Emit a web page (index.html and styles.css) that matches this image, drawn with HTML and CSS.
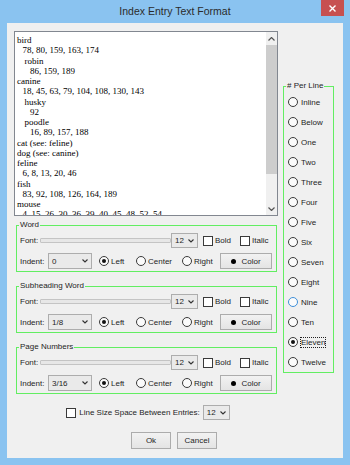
FILE: index.html
```html
<!DOCTYPE html>
<html lang="en">
<head>
    <meta charset="UTF-8">
    <meta name="viewport" content="width=device-width, initial-scale=1.0">
    <title>Index Entry Text Format</title>
    <link rel="stylesheet" href="styles.css">
</head>
<body>
    <div class="window">
        <div class="titlebar">
            <span></span>
            <span class="title">Index Entry Text Format</span>
            <span class="close">
                <svg width="7" height="7" viewBox="0 0 7 7"><path d="M0.5 0.5 L6.5 6.5 M6.5 0.5 L0.5 6.5" stroke="#fff" stroke-width="1.4"/></svg>
            </span>
        </div>

        <div class="client">
            <div class="main">
                <div class="left">
                    <!-- preview of the index -->
                    <div class="preview">
                        <div class="preview-text">
                            <div class="e0">bird</div>
                            <div class="e1">78, 80, 159, 163, 174</div>
                            <div class="e2">robin</div>
                            <div class="e3">86, 159, 189</div>
                            <div class="e0">canine</div>
                            <div class="e1">18, 45, 63, 79, 104, 108, 130, 143</div>
                            <div class="e2">husky</div>
                            <div class="e3">92</div>
                            <div class="e2">poodle</div>
                            <div class="e3">16, 89, 157, 188</div>
                            <div class="e0">cat (see: feline)</div>
                            <div class="e0">dog (see: canine)</div>
                            <div class="e0">feline</div>
                            <div class="e1">6, 8, 13, 20, 46</div>
                            <div class="e0">fish</div>
                            <div class="e1">83, 92, 108, 126, 164, 189</div>
                            <div class="e0">mouse</div>
                            <div class="e1">4, 15, 26, 30, 36, 39, 40, 45, 48, 52, 54</div>
                        </div>
                        <div class="scrollbar">
                            <div class="arrow">
                                <svg width="7" height="4" viewBox="0 0 7 4"><path d="M0.5 3.5 L3.5 0.5 L6.5 3.5" fill="none" stroke="#555" stroke-width="1.2"/></svg>
                            </div>
                            <div class="thumb"></div>
                            <div class="track"></div>
                            <div class="arrow">
                                <svg width="7" height="4" viewBox="0 0 7 4"><path d="M0.5 0.5 L3.5 3.5 L6.5 0.5" fill="none" stroke="#555" stroke-width="1.2"/></svg>
                            </div>
                        </div>
                    </div>

                    <fieldset class="group">
                        <legend>Word</legend>
                        <div class="row font-row">
                            <span class="lbl">Font:</span>
                            <span class="slider"></span>
                            <span class="combo size-combo">12 <svg width="6" height="4" viewBox="0 0 6 4"><path d="M0.5 0.5 L3 3 L5.5 0.5" fill="none" stroke="#333" stroke-width="1.1"/></svg></span>
                            <span class="opt opt-bold"><span class="box"></span>Bold</span>
                            <span class="opt"><span class="box"></span>Italic</span>
                        </div>
                        <div class="row indent-row">
                            <span class="lbl indent-lbl">Indent:</span>
                            <span class="combo indent-combo">0 <svg width="6" height="4" viewBox="0 0 6 4"><path d="M0.5 0.5 L3 3 L5.5 0.5" fill="none" stroke="#333" stroke-width="1.1"/></svg></span>
                            <span class="opt opt-left"><span class="radio on"></span>Left</span>
                            <span class="opt opt-center"><span class="radio"></span>Center</span>
                            <span class="opt opt-right"><span class="radio"></span>Right</span>
                            <span class="btn color-btn"><span class="dot"></span>Color</span>
                        </div>
                    </fieldset>

                    <fieldset class="group">
                        <legend>Subheading Word</legend>
                        <div class="row font-row">
                            <span class="lbl">Font:</span>
                            <span class="slider"></span>
                            <span class="combo size-combo">12 <svg width="6" height="4" viewBox="0 0 6 4"><path d="M0.5 0.5 L3 3 L5.5 0.5" fill="none" stroke="#333" stroke-width="1.1"/></svg></span>
                            <span class="opt opt-bold"><span class="box"></span>Bold</span>
                            <span class="opt"><span class="box"></span>Italic</span>
                        </div>
                        <div class="row indent-row">
                            <span class="lbl indent-lbl">Indent:</span>
                            <span class="combo indent-combo">1/8 <svg width="6" height="4" viewBox="0 0 6 4"><path d="M0.5 0.5 L3 3 L5.5 0.5" fill="none" stroke="#333" stroke-width="1.1"/></svg></span>
                            <span class="opt opt-left"><span class="radio on"></span>Left</span>
                            <span class="opt opt-center"><span class="radio"></span>Center</span>
                            <span class="opt opt-right"><span class="radio"></span>Right</span>
                            <span class="btn color-btn"><span class="dot"></span>Color</span>
                        </div>
                    </fieldset>

                    <fieldset class="group">
                        <legend>Page Numbers</legend>
                        <div class="row font-row">
                            <span class="lbl">Font:</span>
                            <span class="slider"></span>
                            <span class="combo size-combo">12 <svg width="6" height="4" viewBox="0 0 6 4"><path d="M0.5 0.5 L3 3 L5.5 0.5" fill="none" stroke="#333" stroke-width="1.1"/></svg></span>
                            <span class="opt opt-bold"><span class="box"></span>Bold</span>
                            <span class="opt"><span class="box"></span>Italic</span>
                        </div>
                        <div class="row indent-row">
                            <span class="lbl indent-lbl">Indent:</span>
                            <span class="combo indent-combo">3/16 <svg width="6" height="4" viewBox="0 0 6 4"><path d="M0.5 0.5 L3 3 L5.5 0.5" fill="none" stroke="#333" stroke-width="1.1"/></svg></span>
                            <span class="opt opt-left"><span class="radio on"></span>Left</span>
                            <span class="opt opt-center"><span class="radio"></span>Center</span>
                            <span class="opt opt-right"><span class="radio"></span>Right</span>
                            <span class="btn color-btn"><span class="dot"></span>Color</span>
                        </div>
                    </fieldset>

                    <div class="line-size">
                        <span class="box"></span>
                        <span class="line-size-text">Line Size Space Between Entries:</span>
                        <span class="combo size-combo">12 <svg width="6" height="4" viewBox="0 0 6 4"><path d="M0.5 0.5 L3 3 L5.5 0.5" fill="none" stroke="#333" stroke-width="1.1"/></svg></span>
                    </div>
                </div>

                <div class="right">
                    <fieldset class="per-line">
                        <legend># Per Line</legend>
                        <div class="choice"><span class="radio"></span>Inline</div>
                        <div class="choice"><span class="radio"></span>Below</div>
                        <div class="choice"><span class="radio"></span>One</div>
                        <div class="choice"><span class="radio"></span>Two</div>
                        <div class="choice"><span class="radio"></span>Three</div>
                        <div class="choice"><span class="radio"></span>Four</div>
                        <div class="choice"><span class="radio"></span>Five</div>
                        <div class="choice"><span class="radio"></span>Six</div>
                        <div class="choice"><span class="radio"></span>Seven</div>
                        <div class="choice"><span class="radio"></span>Eight</div>
                        <div class="choice"><span class="radio hover"></span>Nine</div>
                        <div class="choice"><span class="radio"></span>Ten</div>
                        <div class="choice"><span class="radio on"></span><span class="focus">Eleven</span></div>
                        <div class="choice"><span class="radio"></span>Twelve</div>
                    </fieldset>
                </div>
            </div>

            <div class="buttons">
                <span class="btn dlg-btn">Ok</span>
                <span class="btn dlg-btn">Cancel</span>
            </div>
        </div>
    </div>
</body>
</html>
```

FILE: styles.css
```css
body {
    margin: 0;
    padding: 0;
    font-family: "Liberation Sans", Arial, sans-serif;
    font-size: 8px;
    color: #1e1e1e;
}
.window {
    width: 350px;
    height: 465px;
    box-sizing: border-box;
    padding: 0 7px 7px 7px;
    background-color: #8ac3f0;
    display: flex;
    flex-direction: column;
}
.titlebar {
    height: 23px;
    display: grid;
    grid-template-columns: 1fr auto 1fr;
    align-items: start;
}
.title {
    line-height: 23px;
    font-size: 10.5px;
    color: #2b2b2b;
}
.close {
    justify-self: end;
    width: 23px;
    height: 16px;
    margin-right: -1px;
    background-color: #c75050;
    display: flex;
    align-items: center;
    justify-content: center;
}
.client {
    flex: 1;
    background-color: #f0f0f0;
    padding: 8px 9px 0 7px;
    display: flex;
    flex-direction: column;
}
.main {
    display: flex;
    gap: 5px;
}
.left {
    width: 264px;
    display: flex;
    flex-direction: column;
}
.right {
    width: 51px;
}

/* index preview */
.preview {
    height: 185px;
    box-sizing: border-box;
    border: 1px solid #828790;
    background-color: #fff;
    display: flex;
}
.preview-text {
    flex: 1;
    overflow: hidden;
    white-space: nowrap;
    padding: 3px 0 0 2px;
    font-family: "Liberation Serif", "Times New Roman", serif;
    font-size: 9px;
    line-height: 10.25px;
    color: #000;
}
.e1 { padding-left: 5.5px; }
.e2 { padding-left: 7.5px; }
.e3 { padding-left: 13px; }
.scrollbar {
    width: 11px;
    display: flex;
    flex-direction: column;
    background-color: #f0f0f0;
}
.arrow {
    height: 13px;
    display: flex;
    align-items: center;
    justify-content: center;
}
.thumb {
    height: 129px;
    background-color: #cdcdcd;
}
.track {
    flex: 1;
}

/* group boxes */
.group {
    margin: 4px 1px 0 2px;
    padding: 3px 3px 2px 3px;
    border: 1px solid #62ee62;
    min-width: 0;
}
.group + .group {
    margin-top: 9px;
}
legend {
    padding: 0 1px;
    margin-left: -1px;
    line-height: 10px;
}
.row {
    display: flex;
    align-items: center;
}
.font-row {
    height: 15px;
}
.indent-row {
    height: 16px;
    margin-top: 5px;
}
.lbl {
    width: 18px;
}
.indent-lbl {
    width: 28px;
}
.slider {
    width: 129px;
    height: 3px;
    margin: 0 0 0 2px;
    background-color: #e7e7e7;
    border: 1px solid #c4c4c4;
    border-radius: 1px;
}
.combo {
    box-sizing: border-box;
    height: 100%;
    border: 1px solid #adadad;
    background-color: #eaeaea;
    padding: 0 3px 0 3px;
    display: flex;
    align-items: center;
    justify-content: space-between;
}
.size-combo {
    width: 27px;
}
.indent-combo {
    width: 44px;
}
.opt {
    display: flex;
    align-items: center;
}
.opt-bold {
    width: 37px;
    margin-left: 5px;
}
.opt-left {
    width: 37px;
    margin-left: 7px;
}
.opt-center {
    width: 46px;
}
.opt-right {
    width: 38px;
}
.box {
    box-sizing: border-box;
    width: 10px;
    height: 10px;
    margin-right: 2px;
    border: 1px solid #3a3a3a;
    background-color: #fff;
}
.radio {
    box-sizing: border-box;
    width: 10px;
    height: 10px;
    margin-right: 2px;
    border: 1px solid #3a3a3a;
    border-radius: 50%;
    background-color: #fbfbfb;
    display: flex;
    align-items: center;
    justify-content: center;
}
.radio.on::after {
    content: "";
    width: 4px;
    height: 4px;
    border-radius: 50%;
    background-color: #111;
}
.radio.hover {
    border-color: #3f8fd8;
}
.btn {
    box-sizing: border-box;
    border: 1px solid #acacac;
    background: linear-gradient(#f2f2f2, #e4e4e4);
    display: flex;
    align-items: center;
    justify-content: center;
}
.color-btn {
    width: 52px;
    height: 16px;
}
.dot {
    width: 5px;
    height: 5px;
    margin-right: 5px;
    border-radius: 50%;
    background-color: #000;
}

/* line size row */
.line-size {
    height: 15px;
    margin: 11px 0 0 4px;
    display: flex;
    align-items: center;
    justify-content: center;
}
.line-size .box {
    margin-right: 3px;
}
.line-size-text {
    margin-right: 3px;
}

/* # per line */
.per-line {
    margin: 50px 0 0 0;
    padding: 1px 0 0 4px;
    border: 1px solid #62ee62;
    min-width: 0;
}
.per-line legend {
    margin-left: -2px;
}
.choice {
    height: 20px;
    display: flex;
    align-items: center;
}
.choice .radio {
    margin-right: 3px;
}
.focus {
    outline: 1px dotted #222;
}

/* dialog buttons */
.buttons {
    margin-top: 12px;
    display: flex;
    justify-content: center;
    gap: 6px;
}
.dlg-btn {
    width: 40px;
    height: 17px;
}
```
